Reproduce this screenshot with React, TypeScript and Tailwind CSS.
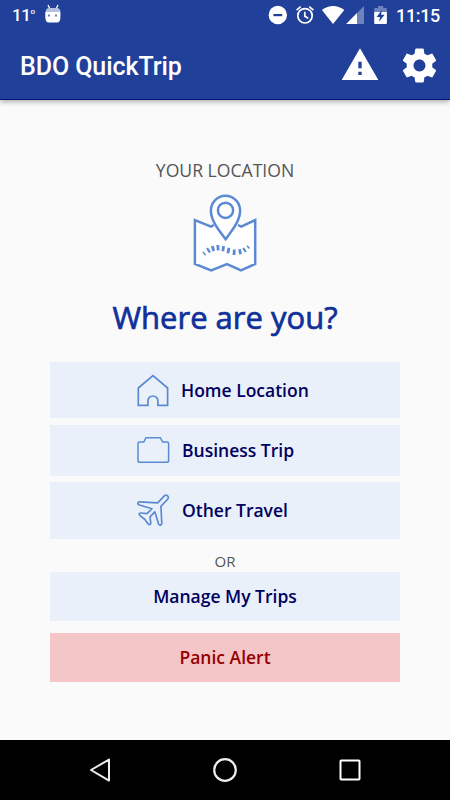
import { ReactNode } from 'react';

const HomeIcon = () => (
  <svg width="34" height="34" viewBox="0 0 34 34" fill="none" stroke="#5b8ad3" strokeWidth="1.7" className="mt-[1px] shrink-0">
    <path d="M2.3 14 17 1.6 31.6 14V31.3H21.9V27a5 5 0 0 0-10 0V31.3H2.3Z" />
  </svg>
);

const CaseIcon = () => (
  <svg width="34" height="34" viewBox="0 0 34 34" fill="none" stroke="#5b8ad3" strokeWidth="1.5" strokeLinejoin="round" className="shrink-0">
    <path d="M3.6 9H7.8L9.9 4.8H24.5L26.6 9H31Q32.6 9 32.6 10.6V27.4Q32.6 29.3 30.8 29.3H3.8Q2 29.3 2 27.4V10.6Q2 9 3.6 9Z" />
  </svg>
);

const PlaneIcon = () => (
  <svg width="34" height="34" viewBox="0 0 34 34" fill="none" stroke="#5b8ad3" strokeWidth="1.7" strokeLinejoin="round" className="mb-[2px] shrink-0">
    <path d="M21.7 9.9 28.6 2.7C30.2 1 33.3 3.3 32 5.7L30.9 7 24.9 13.3 25.8 30.2C25.8 32.3 23.4 32.9 22.6 31L18.8 18.8 14 23.8 14.8 30C14.8 31.6 13.2 32.1 12.2 30.9L8.9 26.5 3.8 22.3C2.7 21.2 3.4 19.9 5 20L11 20.6 15.9 15.8 3.4 12C1 11.2 1.6 8.8 3.8 8.9Z" />
  </svg>
);

const MapIcon = () => (
  <svg width="64" height="78" viewBox="0 0 64 78" fill="none" stroke="#5b8ad3" strokeWidth="2.5" className="mt-[12px] shrink-0">
    <path d="M20.8 31 18 32.6 1.9 26V70L18.2 76.3 34 70 48 76.3 62.2 70V26L48.2 32.6 45 31" fill="#fff" />
    <path d="M32.6 45.2C27 37.5 17.9 27.5 17.9 16.5A14.6 14.8 0 0 1 47.1 16.5C47.1 27.5 38 37.5 32.6 45.2Z" fill="#fff" />
    <circle cx="32.5" cy="16.3" r="7.6" />
    {/* dashed trail, thinner at both ends */}
    <path d="M10 58 12.7 61.2M54 51.8 56.5 54.6" strokeWidth="1.5" />
    <path d="M14 54.2 17 58.5M50.2 54 52.8 58" strokeWidth="2.2" />
    <path d="M19.3 52.2 20.7 57M24.8 51 25.2 56.3M30.6 52 29.8 57.2M36 53.9 34.8 59.2M41.3 55.5 41 61M46.5 55.2 47.6 60.3" strokeWidth="2.8" />
  </svg>
);

const StatusIcons = () => (
  <svg width="122" height="24" viewBox="267 3 122 24" fill="#fff">
    <circle cx="277.8" cy="15" r="9.2" />
    <path d="M273.4 14H282.2V16.2H273.4Z" fill="#21409a" />
    <g fill="none" stroke="#fff" strokeWidth="1.7">
      <circle cx="305" cy="15.8" r="7.2" />
      <path d="M304.8 11.7V16.2L308.2 18.3M296.6 10.1 300.7 6.7M309.3 6.7 313.4 10.1" />
    </g>
    <path d="M333 24 321.9 10Q333 2 344.3 10Z" />
    <path d="M364 6V24H346.2Z" opacity=".35" />
    <path d="M357 13.1V24H346.2Z" />
    <path d="M374.2 12V9Q374.2 8 375.2 8H378V6H383.3V8H385.9Q386.9 8 386.9 9V12Z" opacity=".35" />
    <path d="M374.2 12H386.9V23Q386.9 24 385.9 24H375.2Q374.2 24 374.2 23Z" />
    <path d="M382 9.7 376.6 16.9H380L379 21.7 384.6 14.7H381Z" fill="#21409a" />
  </svg>
);

interface TripButtonProps {
  label: string;
  className: string;
  labelClass?: string;
  icon?: ReactNode;
}

function TripButton({ label, className, labelClass = '', icon }: TripButtonProps) {
  return (
    <button className={`flex w-full shrink-0 items-center text-[17.5px] font-semibold ${className}`}>
      {icon}
      <span className={`whitespace-nowrap ${labelClass}`}>{label}</span>
    </button>
  );
}

export default function App() {
  return (
    <div className="flex h-[800px] w-[450px] flex-col overflow-hidden bg-[#fafafa] font-['Open_Sans',sans-serif]">
      <header className="h-[100px] shrink-0 border-b border-[#07107c] bg-[#21409a] font-['Roboto',sans-serif] text-white shadow-[0_2px_5px_rgba(0,0,0,0.3)]">
        {/* Status bar */}
        <div className="flex h-[30px] items-center pl-3 pr-[10px]">
          <span className="w-[32px] pt-[1px] text-[17px] font-medium tracking-[-0.4px]">11<sup className="top-[-7px] text-[8px]">o</sup></span>
          <svg width="18" height="20" viewBox="0 0 18 20" className="mb-[2px]">
            <path d="M4 1 6 5M14 1 12 5" stroke="#fff" strokeWidth="1.3" />
            <path d="M1.5 8Q2 4 5 4H13Q16 4 16.5 8Z" fill="#b6c0e0" />
            <path d="M1.3 8H16.4V13Q16.4 18.5 13 18.5H5Q1.3 18.5 1.3 13Z" fill="#fff" />
            <path d="M4 10.5H6V12.5H4ZM11 10.5H13V12.5H11Z" fill="#6f82bd" />
          </svg>
          <div className="ml-auto flex items-center">
            <StatusIcons />
            <span className="ml-[7px] w-[44px] whitespace-nowrap text-[18px] font-medium tracking-[-0.35px]">11:15</span>
          </div>
        </div>
        {/* App bar */}
        <div className="flex h-[70px] items-center pl-5 pr-[10px]">
          <h1 className="pt-[3px] text-[25px] font-medium tracking-[-0.08px]">BDO QuickTrip</h1>
          <svg width="40" height="40" viewBox="0 0 24 24" fill="#fff" className="ml-auto">
            <path d="M1 21h22L12 2 1 21zm12-3h-2v-2h2v2zm0-4h-2v-4h2v4z" />
          </svg>
          <svg width="41" height="41" viewBox="0 0 24 24" fill="#fff" className="ml-[19.5px]">
            <path d="M19.43 12.98c.04-.32.07-.64.07-.98s-.03-.66-.07-.98l2.11-1.65c.19-.15.24-.42.12-.64l-2-3.46c-.12-.22-.39-.3-.61-.22l-2.49 1c-.52-.4-1.08-.73-1.69-.98l-.38-2.65C14.46 2.18 14.25 2 14 2h-4c-.25 0-.46.18-.49.42l-.38 2.65c-.61.25-1.17.59-1.69.98l-2.49-1c-.23-.09-.49 0-.61.22l-2 3.46c-.13.22-.07.49.12.64l2.11 1.65c-.04.32-.07.65-.07.98s.03.66.07.98l-2.11 1.65c-.19.15-.24.42-.12.64l2 3.46c.12.22.39.3.61.22l2.49-1c.52.4 1.08.73 1.69.98l.38 2.65c.03.24.24.42.49.42h4c.25 0 .46-.18.49-.42l.38-2.65c.61-.25 1.17-.59 1.69-.98l2.49 1c.23.09.49 0 .61-.22l2-3.46c.12-.22.07-.49-.12-.64l-2.11-1.65zM12 15.5c-1.93 0-3.5-1.57-3.5-3.5s1.57-3.5 3.5-3.5 3.5 1.57 3.5 3.5-1.57 3.5-3.5 3.5z" />
          </svg>
        </div>
      </header>

      <main className="flex h-[640px] shrink-0 flex-col items-center px-[50px] pt-[58px]">
        <p className="h-6 text-[17.6px] leading-6 text-[#555]">YOUR LOCATION</p>
        <MapIcon />
        <h2 className="mt-[23px] h-[44px] whitespace-nowrap text-[31px] font-medium leading-[44px] text-[#10309a] [-webkit-text-stroke:0.7px_#10309a]">Where are you?</h2>

        <div className="mt-[23px] flex w-full flex-col">
          <TripButton label="Home Location" icon={<HomeIcon />} className="h-[56px] bg-[#e9f0f9] pl-[86px] text-[#00005f]" labelClass="ml-[11px]" />
          <TripButton label="Business Trip" icon={<CaseIcon />} className="mt-[6.5px] h-[51px] bg-[#e9f0f9] pl-[86px] text-[#00005f]" labelClass="ml-[12px]" />
          <TripButton label="Other Travel" icon={<PlaneIcon />} className="mt-[6.5px] h-[57px] bg-[#e9f0f9] pl-[86px] text-[#00005f]" labelClass="ml-[12px]" />
          <p className="mt-[12px] h-[21px] text-center text-[15px] leading-[21px] text-[#555]">OR</p>
          <TripButton label="Manage My Trips" className="h-[48.5px] justify-center bg-[#e9f0f9] text-[#00005f]" />
          <TripButton label="Panic Alert" className="mt-[12.5px] h-[48.5px] justify-center bg-[#f5c6c8] text-[#960000]" />
        </div>
      </main>

      {/* Android navigation bar */}
      <nav className="flex h-[60px] shrink-0 items-center justify-between bg-black px-[87px]">
        <svg width="26" height="26" viewBox="0 0 26 26" fill="none" stroke="#eee" strokeWidth="2" strokeLinejoin="round">
          <path d="M4 13 22 2.6V23.6Z" />
        </svg>
        <svg width="26" height="26" viewBox="0 0 26 26" fill="none" stroke="#eee" strokeWidth="2.2">
          <circle cx="13" cy="13" r="10.8" />
        </svg>
        <svg width="26" height="26" viewBox="0 0 26 26" fill="none" stroke="#fff" strokeWidth="2">
          <rect x="3.5" y="3.5" width="19" height="19" rx=".7" />
        </svg>
      </nav>
    </div>
  );
}
